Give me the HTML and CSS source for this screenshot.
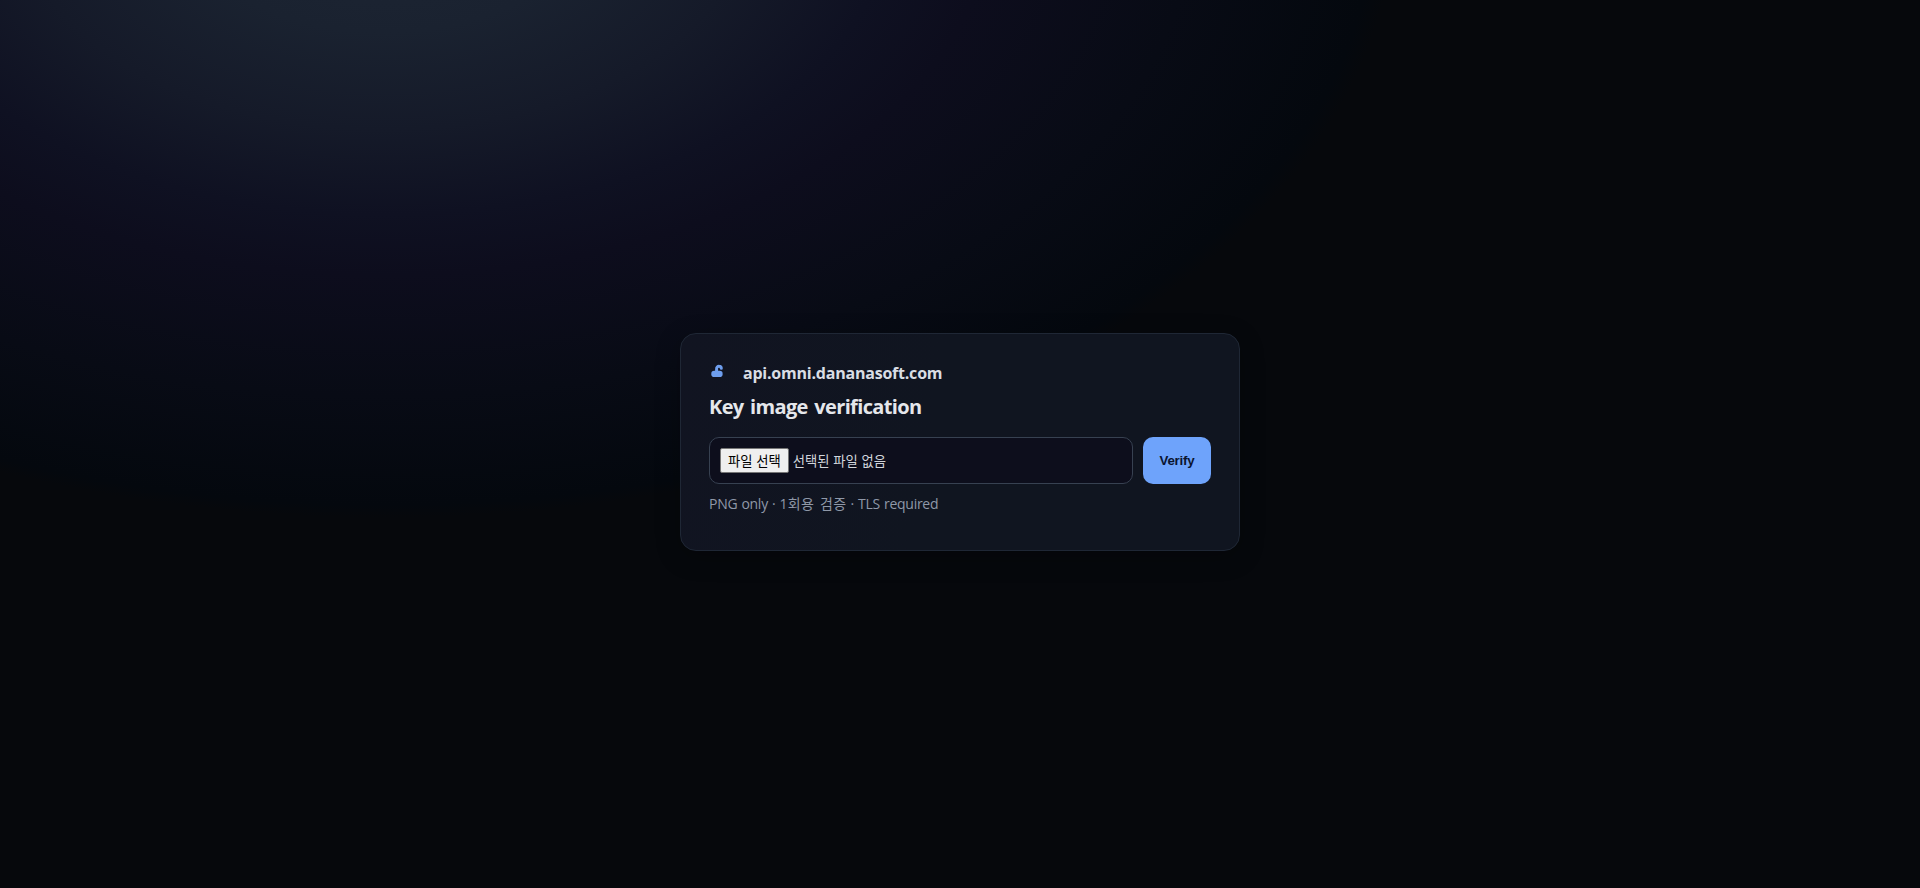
FILE: index.html
```
<!DOCTYPE html>
<html lang="ko">
<head>
    <meta charset="UTF-8">
    <meta name="viewport" content="width=device-width, initial-scale=1.0">
    <title>Key image verification</title>
    <link rel="stylesheet" href="styles.css">
</head>

<body>
    <main class="card">
        <div class="brand">
            <svg class="lock" width="24" height="24" viewBox="0 0 24 24" aria-hidden="true">
                <path class="shackle" d="M7.6 9V7a2.4 2.4 0 0 1 2.6-2.7q2 .1 2.1 2"/>
                <rect class="lock-body" x="2.3" y="8.8" width="11.3" height="6.2" rx="2.8"/>
            </svg>
            <span class="host">api.omni.dananasoft.com</span>
        </div>
        <h1>Key image verification</h1>

        <form id="verifyForm" class="row">
            <label class="file-field">
                <input type="file" id="keyImage" name="keyImage" accept="image/png" hidden>
                <span class="file-btn">파일 선택</span>
                <span class="file-name" id="fileName">선택된 파일 없음</span>
            </label>
            <button type="submit">Verify</button>
        </form>
        <p class="hint">PNG only · <span class="hint-ko">1회용 검증</span> · TLS required</p>
    </main>

    <script>
        document.getElementById('keyImage').addEventListener('change', function() {
            document.getElementById('fileName').textContent = this.files.length ? this.files[0].name : '선택된 파일 없음';
        });
        document.getElementById('verifyForm').addEventListener('submit', function(event) {
            event.preventDefault();
        });
    </script>
</body>
</html>
```
FILE: styles.css
```
* {
    box-sizing: border-box;
}
body {
    margin: 0;
    min-height: 100vh;
    display: flex;
    justify-content: center;
    align-items: center;
    background: radial-gradient(1010px 606px at 20% -10%, #1e2634 0%, #1a2230 20%, #151a29 36%, #0f1122 50%, #0d0d1d 60%, #080b15 80%, #04080e 98%, #06080c 100%);
    color: #e5e7eb;
    font-family: "Open Sans", "Noto Sans CJK KR", sans-serif;
}
.card {
    width: 560px;
    height: 218px;
    margin-top: -4px;
    padding: 28px;
    background: linear-gradient(100deg, #111421 0%, #101520 45%);
    border: 1px solid #1f2735;
    border-radius: 16px;
    box-shadow: 0 6px 24px rgba(0, 0, 0, 0.25);
}
.brand {
    display: flex;
    align-items: center;
    gap: 10px;
    height: 24px;
}
.lock-body {
    fill: #6e9eee;
}
.shackle {
    fill: none;
    stroke: #6e9eee;
    stroke-width: 3;
    stroke-linecap: round;
}
.host {
    position: relative;
    top: -1px;
    font-size: 16px;
    font-weight: 700;
    letter-spacing: -0.22px;
    color: #d9dde4;
}
h1 {
    margin: 7px 0 16px;
    font-size: 20px;
    line-height: 28px;
    font-weight: 700;
    letter-spacing: -0.65px;
    word-spacing: 2px;
}
.row {
    display: flex;
    gap: 10px;
}
.file-field {
    flex: 1;
    display: flex;
    align-items: center;
    gap: 4px;
    height: 47px;
    padding: 0 10px;
    background: #0d0e1c;
    border: 1px solid #374151;
    border-radius: 10px;
    font-family: "Noto Sans CJK KR", sans-serif;
    font-size: 13.33px;
    color: #d1d5db;
}
.file-btn {
    height: 25px;
    padding: 0 7px;
    line-height: 23px;
    background: #efefef;
    border: 1px solid #767676;
    border-radius: 2px;
    color: #000;
}
button {
    width: 68px;
    height: 47px;
    padding: 0;
    background: #6ea3fb;
    border: none;
    border-radius: 10px;
    color: #0b1530;
    font-family: "Liberation Sans", Arial, sans-serif;
    font-size: 13.33px;
    font-weight: 700;
    letter-spacing: -0.2px;
    cursor: pointer;
}
.hint {
    margin: 10px 0 0;
    font-size: 14px;
    line-height: 20px;
    letter-spacing: -0.27px;
    word-spacing: 0.7px;
    color: #8f98a8;
}
.hint-ko {
    letter-spacing: 0.4px;
    word-spacing: 1.5px;
}
```
